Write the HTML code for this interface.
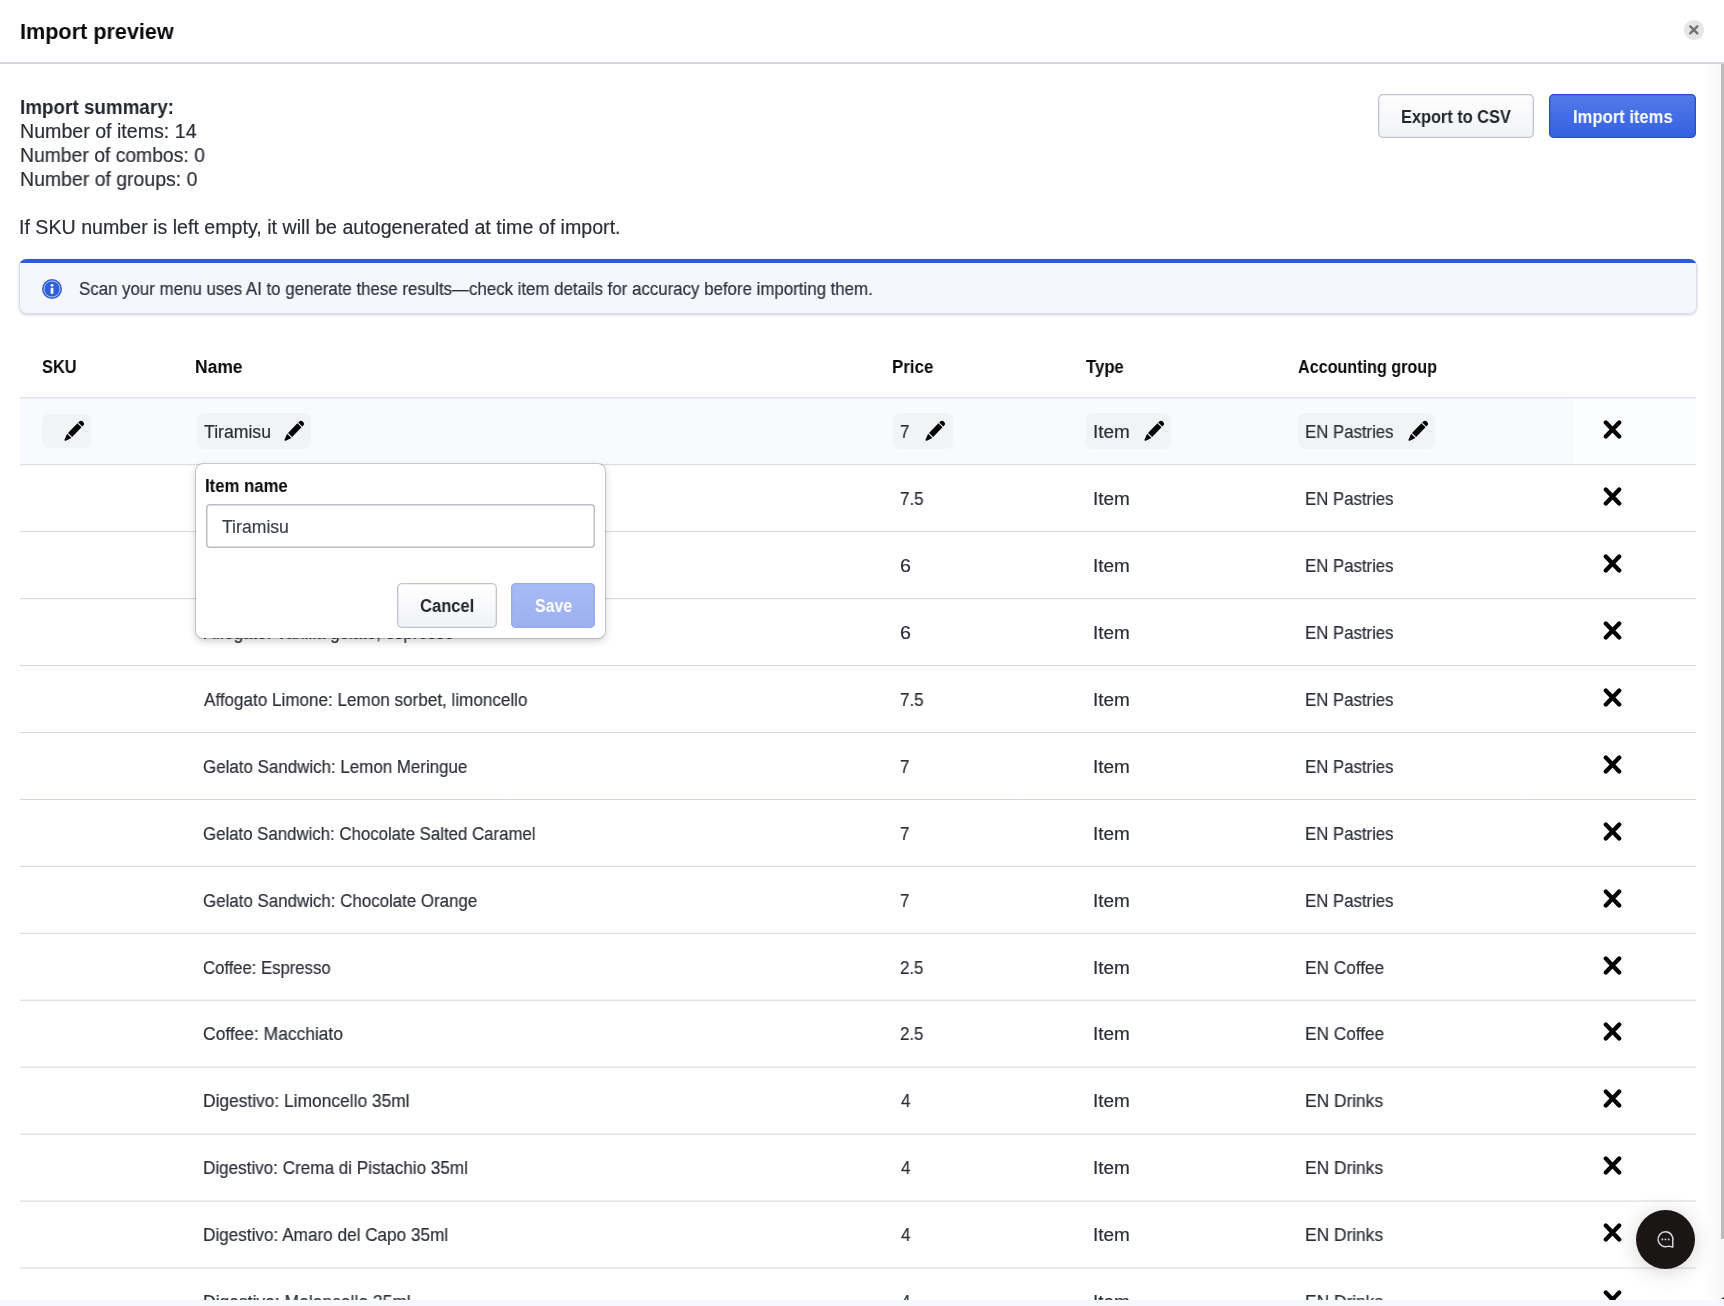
<!DOCTYPE html>
<html lang="en">
<head>
<meta charset="utf-8">
<title>Import preview</title>
<style>
*{box-sizing:border-box;margin:0;padding:0}
html,body{width:1724px;height:1306px;overflow:hidden;background:#fff}
body{position:relative;font-family:"Liberation Sans",Arial,sans-serif;color:#2b2e36;font-size:17.55px}
.t{position:absolute;white-space:nowrap;transform-origin:0 50%;display:block;font-weight:normal;will-change:transform}
.t{-webkit-text-stroke:.18px currentColor}
.t.b{font-weight:bold;color:#08090c;-webkit-text-stroke:0}
.hdr{position:absolute;left:0;top:0;width:1724px;height:64px;background:#fff}
.hdr:after{content:"";position:absolute;left:0;right:0;top:61.8px;height:2.2px;background:#d1d5dc}
.close{position:absolute;left:1684.2px;top:20.4px;width:19.6px;height:19.6px;border-radius:50%;background:#e6e6e6}
.close svg{position:absolute;left:0;top:0}
.btn{position:absolute;height:44.6px;border-radius:5px}
.btn.sec{box-shadow:inset 0 0 0 1.35px #c0c5cd;background:linear-gradient(#ffffff,#f1f2f5)}
.btn.sec .t{color:#22252b}
.btn.pri{box-shadow:inset 0 0 0 1.35px #2a4fd0;background:linear-gradient(#547be9,#3460e0)}
.btn.pri .t{color:#fff}
.btn.dis{box-shadow:inset 0 0 0 1.35px #97aaec;background:linear-gradient(#a9bbf5,#9bb0ef)}
.btn.dis .t{color:#fff}
.banner{position:absolute;left:19.4px;top:258.7px;width:1677.2px;height:55.8px;border-radius:7.5px;background:#f6f7fe;box-shadow:inset 0 0 0 1px #d9dce7,0 1px 3px rgba(20,30,60,.2);overflow:hidden}
.banner:before{content:"";position:absolute;left:0;right:0;top:0;height:4.4px;background:#2e5bd8}
.banner svg{position:absolute;left:22.6px;top:20.2px}
.tbl{position:absolute;left:20px;top:397px;width:1676px;height:910px}
.row{position:absolute;left:0;width:1676px}
.ln{position:absolute;left:0;right:0;top:0;height:2px}
.row.first{background:linear-gradient(#fff 1px,#f9fafd 1px)}
.cellx{position:absolute;left:1554px;top:1px;width:122px;bottom:0;background:#fbfcfe}
.x{position:absolute;left:1582.6px;top:22.7px;width:19px;height:19px}
.chip{position:absolute;top:16.2px;height:35.8px;border-radius:7px;background:#f2f3f7}
.pen{position:absolute;width:21px;height:21px;overflow:visible}
.pop{position:absolute;left:196px;top:464px;width:409px;height:174px;background:#fff;border-radius:7px;box-shadow:0 0 0 1px rgba(40,45,55,.22),0 3px 9px rgba(0,0,0,.2)}
.inp{position:absolute;left:10.1px;top:40px;width:388.7px;height:44.4px;border-radius:4px;background:#fff;box-shadow:inset 0 0 0 1.5px #b9bec8}
.inp .t{color:#3c4049}
.sb{position:absolute;left:1721px;top:63.6px;width:3px;height:1175.4px;background:#bababa}
.corner{position:absolute;left:1720.5px;top:1297.3px;width:0;height:0;border-style:solid;border-width:0 0 2.6px 3.5px;border-color:transparent transparent #2a2a2a transparent}
.edge{position:absolute;left:1703px;top:64px;width:21px;height:1236px;background:linear-gradient(90deg,rgba(0,0,0,0),rgba(0,0,0,.01) 40%,rgba(0,0,0,.036))}
.foot{position:absolute;left:0;top:1299.7px;width:1724px;height:7px;background:#f7f8fd}
.chat{position:absolute;left:1635.6px;top:1209.6px;width:59.4px;height:59.4px;border-radius:50%;background:#1a1615;box-shadow:0 3px 22px rgba(0,0,0,.17)}
.chat svg{position:absolute;left:0;top:0}
</style>
</head>
<body>
<div class="hdr"><span class="t b" style="left:19.91px;top:19.13px;line-height:24px;font-size:22.7px;transform:scaleX(0.9526)">Import preview</span>
<div class="close"><svg width="19.6" height="19.6" viewBox="0 0 20 20"><path d="M6.4 6.4 L13.6 13.6 M13.6 6.4 L6.4 13.6" stroke="#747474" stroke-width="2.5" stroke-linecap="round" fill="none"/></svg></div>
</div>

<div class="summary"><span class="t b" style="left:19.65px;top:95.21px;line-height:24px;font-size:19.6px;transform:scaleX(0.9619);color:#23262d">Import summary:</span><span class="t" style="left:19.71px;top:119.21px;line-height:24px;font-size:19.6px;transform:scaleX(1.0010)">Number of items: 14</span><span class="t" style="left:19.74px;top:143.21px;line-height:24px;font-size:19.6px;transform:scaleX(0.9868)">Number of combos: 0</span><span class="t" style="left:19.73px;top:167.11px;line-height:24px;font-size:19.6px;transform:scaleX(0.9930)">Number of groups: 0</span></div>
<span class="t" style="left:19.48px;top:214.51px;line-height:24px;font-size:19.6px;transform:scaleX(1.0013)">If SKU number is left empty, it will be autogenerated at time of import.</span>

<div class="btn sec" style="left:1378px;top:93.8px;width:156.2px"><span class="t b" style="left:22.54px;top:11.12px;line-height:24px;font-size:17.55px;transform:scaleX(0.9315)">Export to CSV</span></div>
<div class="btn pri" style="left:1549.2px;top:93.8px;width:147.1px"><span class="t b" style="left:23.73px;top:11.12px;line-height:24px;font-size:17.55px;transform:scaleX(0.9474)">Import items</span></div>

<div class="banner">
<svg width="20" height="20" viewBox="0 0 20 20"><circle cx="10" cy="10" r="10" fill="#2f5fdb"/><circle cx="10" cy="10" r="8.05" fill="none" stroke="#b7c7f3" stroke-width="0.95"/><circle cx="10.05" cy="6.35" r="1.4" fill="#fff"/><rect x="8.75" y="8.8" width="2.6" height="6" fill="#fff"/></svg>
<span class="t" style="left:59.52px;top:18.02px;line-height:24px;font-size:17.55px;transform:scaleX(0.9618)">Scan your menu uses AI to generate these results—check item details for accuracy before importing them.</span>
</div>

<div class="thead"><span class="t b" style="left:41.56px;top:354.82px;line-height:24px;font-size:17.55px;transform:scaleX(0.9354)">SKU</span><span class="t b" style="left:195.47px;top:354.82px;line-height:24px;font-size:17.55px;transform:scaleX(0.9932)">Name</span><span class="t b" style="left:892.41px;top:354.82px;line-height:24px;font-size:17.55px;transform:scaleX(0.9621)">Price</span><span class="t b" style="left:1086.13px;top:354.82px;line-height:24px;font-size:17.55px;transform:scaleX(0.9541)">Type</span><span class="t b" style="left:1297.55px;top:354.82px;line-height:24px;font-size:17.55px;transform:scaleX(0.9209)">Accounting group</span></div>

<div class="tbl">
<div class="row first" style="top:0px;height:67px"><i class="cellx"></i><i class="ln" style="background:linear-gradient(rgba(209,214,222,0.70) 50%,rgba(209,214,222,0.30) 50%)"></i><i class="chip" style="left:22.2px;width:49.0px;top:16.6px;height:34.7px"></i><svg class="pen" style="left:44.0px;top:23.4px" viewBox="0 0 21 21"><g transform="translate(0.8 20.5) rotate(-46)" fill="#000"><path d="M0.5 -0.8 L6.4 -2.95 L6.4 2.95 L0.5 0.8 Q-0.9 0 0.5 -0.8Z"/><rect x="7.6" y="-2.85" width="13.5" height="5.7"/><path d="M22.2 -2.85 H23.7 A2.4 2.85 0 0 1 23.7 2.85 H22.2Z"/></g></svg><i class="chip" style="left:176.5px;width:114.9px;top:15.9px;height:36.1px"></i><svg class="pen" style="left:264.1px;top:23.4px" viewBox="0 0 21 21"><g transform="translate(0.8 20.5) rotate(-46)" fill="#000"><path d="M0.5 -0.8 L6.4 -2.95 L6.4 2.95 L0.5 0.8 Q-0.9 0 0.5 -0.8Z"/><rect x="7.6" y="-2.85" width="13.5" height="5.7"/><path d="M22.2 -2.85 H23.7 A2.4 2.85 0 0 1 23.7 2.85 H22.2Z"/></g></svg><i class="chip" style="left:872.9px;width:59.7px;top:15.9px;height:36.0px"></i><svg class="pen" style="left:905.4px;top:23.4px" viewBox="0 0 21 21"><g transform="translate(0.8 20.5) rotate(-46)" fill="#000"><path d="M0.5 -0.8 L6.4 -2.95 L6.4 2.95 L0.5 0.8 Q-0.9 0 0.5 -0.8Z"/><rect x="7.6" y="-2.85" width="13.5" height="5.7"/><path d="M22.2 -2.85 H23.7 A2.4 2.85 0 0 1 23.7 2.85 H22.2Z"/></g></svg><i class="chip" style="left:1066.0px;width:84.9px;top:15.9px;height:36.0px"></i><svg class="pen" style="left:1123.5px;top:23.4px" viewBox="0 0 21 21"><g transform="translate(0.8 20.5) rotate(-46)" fill="#000"><path d="M0.5 -0.8 L6.4 -2.95 L6.4 2.95 L0.5 0.8 Q-0.9 0 0.5 -0.8Z"/><rect x="7.6" y="-2.85" width="13.5" height="5.7"/><path d="M22.2 -2.85 H23.7 A2.4 2.85 0 0 1 23.7 2.85 H22.2Z"/></g></svg><i class="chip" style="left:1278.1px;width:136.9px;top:15.9px;height:36.0px"></i><svg class="pen" style="left:1387.7px;top:23.4px" viewBox="0 0 21 21"><g transform="translate(0.8 20.5) rotate(-46)" fill="#000"><path d="M0.5 -0.8 L6.4 -2.95 L6.4 2.95 L0.5 0.8 Q-0.9 0 0.5 -0.8Z"/><rect x="7.6" y="-2.85" width="13.5" height="5.7"/><path d="M22.2 -2.85 H23.7 A2.4 2.85 0 0 1 23.7 2.85 H22.2Z"/></g></svg><span class="t" style="left:183.91px;top:22.92px;line-height:24px;font-size:17.55px;transform:scaleX(1.0069)">Tiramisu</span><span class="t" style="left:880.25px;top:22.92px;line-height:24px;font-size:17.55px;transform:scaleX(0.9650)">7</span><span class="t" style="left:1072.73px;top:22.92px;line-height:24px;font-size:17.55px;transform:scaleX(1.0812)">Item</span><span class="t" style="left:1284.92px;top:22.92px;line-height:24px;font-size:17.55px;transform:scaleX(0.9563)">EN Pastries</span><svg class="x" style="top:22.6px" viewBox="0 0 19 19"><path d="M2.8 2.55 L16.2 16.45 M16.2 2.55 L2.8 16.45" stroke="#000" stroke-width="4.3" stroke-linecap="round" fill="none"/></svg></div>
<div class="row" style="top:67px;height:67px"><i class="ln" style="background:linear-gradient(rgba(209,214,222,0.76) 50%,rgba(209,214,222,0.24) 50%)"></i><span class="t" style="left:183.33px;top:22.92px;line-height:24px;font-size:17.55px;transform:scaleX(0.9650)">Cannoli Siciliani: Ricotta, pistachio</span><span class="t" style="left:880.24px;top:22.92px;line-height:24px;font-size:17.55px;transform:scaleX(0.9720)">7.5</span><span class="t" style="left:1072.73px;top:22.92px;line-height:24px;font-size:17.55px;transform:scaleX(1.0812)">Item</span><span class="t" style="left:1284.92px;top:22.92px;line-height:24px;font-size:17.55px;transform:scaleX(0.9563)">EN Pastries</span><svg class="x" style="top:22.6px" viewBox="0 0 19 19"><path d="M2.8 2.55 L16.2 16.45 M16.2 2.55 L2.8 16.45" stroke="#000" stroke-width="4.3" stroke-linecap="round" fill="none"/></svg></div>
<div class="row" style="top:134px;height:67px"><i class="ln" style="background:linear-gradient(rgba(209,214,222,0.82) 50%,rgba(209,214,222,0.18) 50%)"></i><span class="t" style="left:182.91px;top:22.92px;line-height:24px;font-size:17.55px;transform:scaleX(0.9650)">Panna Cotta: Wild berries</span><span class="t" style="left:880.11px;top:22.92px;line-height:24px;font-size:17.55px;transform:scaleX(1.1213)">6</span><span class="t" style="left:1072.73px;top:22.92px;line-height:24px;font-size:17.55px;transform:scaleX(1.0812)">Item</span><span class="t" style="left:1284.92px;top:22.92px;line-height:24px;font-size:17.55px;transform:scaleX(0.9563)">EN Pastries</span><svg class="x" style="top:22.6px" viewBox="0 0 19 19"><path d="M2.8 2.55 L16.2 16.45 M16.2 2.55 L2.8 16.45" stroke="#000" stroke-width="4.3" stroke-linecap="round" fill="none"/></svg></div>
<div class="row" style="top:201px;height:67px"><i class="ln" style="background:linear-gradient(rgba(209,214,222,0.88) 50%,rgba(209,214,222,0.12) 50%)"></i><span class="t" style="left:184.09px;top:22.92px;line-height:24px;font-size:17.55px;transform:scaleX(0.9632)">Affogato: Vanilla gelato, espresso</span><span class="t" style="left:880.11px;top:22.92px;line-height:24px;font-size:17.55px;transform:scaleX(1.1213)">6</span><span class="t" style="left:1072.73px;top:22.92px;line-height:24px;font-size:17.55px;transform:scaleX(1.0812)">Item</span><span class="t" style="left:1284.92px;top:22.92px;line-height:24px;font-size:17.55px;transform:scaleX(0.9563)">EN Pastries</span><svg class="x" style="top:22.6px" viewBox="0 0 19 19"><path d="M2.8 2.55 L16.2 16.45 M16.2 2.55 L2.8 16.45" stroke="#000" stroke-width="4.3" stroke-linecap="round" fill="none"/></svg></div>
<div class="row" style="top:268px;height:67px"><i class="ln" style="background:linear-gradient(rgba(209,214,222,0.94) 50%,rgba(209,214,222,0.06) 50%)"></i><span class="t" style="left:184.08px;top:22.92px;line-height:24px;font-size:17.55px;transform:scaleX(0.9742)">Affogato Limone: Lemon sorbet, limoncello</span><span class="t" style="left:880.24px;top:22.92px;line-height:24px;font-size:17.55px;transform:scaleX(0.9720)">7.5</span><span class="t" style="left:1072.73px;top:22.92px;line-height:24px;font-size:17.55px;transform:scaleX(1.0812)">Item</span><span class="t" style="left:1284.92px;top:22.92px;line-height:24px;font-size:17.55px;transform:scaleX(0.9563)">EN Pastries</span><svg class="x" style="top:22.6px" viewBox="0 0 19 19"><path d="M2.8 2.55 L16.2 16.45 M16.2 2.55 L2.8 16.45" stroke="#000" stroke-width="4.3" stroke-linecap="round" fill="none"/></svg></div>
<div class="row" style="top:335px;height:66px"><i class="ln" style="background:linear-gradient(rgba(209,214,222,1.00) 50%,rgba(209,214,222,0.00) 50%)"></i><span class="t" style="left:183.35px;top:22.92px;line-height:24px;font-size:17.55px;transform:scaleX(0.9655)">Gelato Sandwich: Lemon Meringue</span><span class="t" style="left:880.25px;top:22.92px;line-height:24px;font-size:17.55px;transform:scaleX(0.9650)">7</span><span class="t" style="left:1072.73px;top:22.92px;line-height:24px;font-size:17.55px;transform:scaleX(1.0812)">Item</span><span class="t" style="left:1284.92px;top:22.92px;line-height:24px;font-size:17.55px;transform:scaleX(0.9563)">EN Pastries</span><svg class="x" style="top:22.6px" viewBox="0 0 19 19"><path d="M2.8 2.55 L16.2 16.45 M16.2 2.55 L2.8 16.45" stroke="#000" stroke-width="4.3" stroke-linecap="round" fill="none"/></svg></div>
<div class="row" style="top:401px;height:67px"><i class="ln" style="background:linear-gradient(rgba(209,214,222,0.06) 50%,rgba(209,214,222,0.94) 50%)"></i><span class="t" style="left:183.36px;top:23.92px;line-height:24px;font-size:17.55px;transform:scaleX(0.9584)">Gelato Sandwich: Chocolate Salted Caramel</span><span class="t" style="left:880.25px;top:23.92px;line-height:24px;font-size:17.55px;transform:scaleX(0.9650)">7</span><span class="t" style="left:1072.73px;top:23.92px;line-height:24px;font-size:17.55px;transform:scaleX(1.0812)">Item</span><span class="t" style="left:1284.92px;top:23.92px;line-height:24px;font-size:17.55px;transform:scaleX(0.9563)">EN Pastries</span><svg class="x" style="top:23.6px" viewBox="0 0 19 19"><path d="M2.8 2.55 L16.2 16.45 M16.2 2.55 L2.8 16.45" stroke="#000" stroke-width="4.3" stroke-linecap="round" fill="none"/></svg></div>
<div class="row" style="top:468px;height:67px"><i class="ln" style="background:linear-gradient(rgba(209,214,222,0.12) 50%,rgba(209,214,222,0.88) 50%)"></i><span class="t" style="left:183.35px;top:23.92px;line-height:24px;font-size:17.55px;transform:scaleX(0.9639)">Gelato Sandwich: Chocolate Orange</span><span class="t" style="left:880.25px;top:23.92px;line-height:24px;font-size:17.55px;transform:scaleX(0.9650)">7</span><span class="t" style="left:1072.73px;top:23.92px;line-height:24px;font-size:17.55px;transform:scaleX(1.0812)">Item</span><span class="t" style="left:1284.92px;top:23.92px;line-height:24px;font-size:17.55px;transform:scaleX(0.9563)">EN Pastries</span><svg class="x" style="top:23.6px" viewBox="0 0 19 19"><path d="M2.8 2.55 L16.2 16.45 M16.2 2.55 L2.8 16.45" stroke="#000" stroke-width="4.3" stroke-linecap="round" fill="none"/></svg></div>
<div class="row" style="top:535px;height:67px"><i class="ln" style="background:linear-gradient(rgba(209,214,222,0.18) 50%,rgba(209,214,222,0.82) 50%)"></i><span class="t" style="left:183.34px;top:23.92px;line-height:24px;font-size:17.55px;transform:scaleX(0.9508)">Coffee: Espresso</span><span class="t" style="left:880.25px;top:23.92px;line-height:24px;font-size:17.55px;transform:scaleX(0.9650)">2.5</span><span class="t" style="left:1072.73px;top:23.92px;line-height:24px;font-size:17.55px;transform:scaleX(1.0812)">Item</span><span class="t" style="left:1284.88px;top:23.92px;line-height:24px;font-size:17.55px;transform:scaleX(0.9827)">EN Coffee</span><svg class="x" style="top:23.6px" viewBox="0 0 19 19"><path d="M2.8 2.55 L16.2 16.45 M16.2 2.55 L2.8 16.45" stroke="#000" stroke-width="4.3" stroke-linecap="round" fill="none"/></svg></div>
<div class="row" style="top:602px;height:67px"><i class="ln" style="background:linear-gradient(rgba(209,214,222,0.24) 50%,rgba(209,214,222,0.76) 50%)"></i><span class="t" style="left:183.31px;top:22.92px;line-height:24px;font-size:17.55px;transform:scaleX(0.9930)">Coffee: Macchiato</span><span class="t" style="left:880.25px;top:22.92px;line-height:24px;font-size:17.55px;transform:scaleX(0.9650)">2.5</span><span class="t" style="left:1072.73px;top:22.92px;line-height:24px;font-size:17.55px;transform:scaleX(1.0812)">Item</span><span class="t" style="left:1284.88px;top:22.92px;line-height:24px;font-size:17.55px;transform:scaleX(0.9827)">EN Coffee</span><svg class="x" style="top:22.6px" viewBox="0 0 19 19"><path d="M2.8 2.55 L16.2 16.45 M16.2 2.55 L2.8 16.45" stroke="#000" stroke-width="4.3" stroke-linecap="round" fill="none"/></svg></div>
<div class="row" style="top:669px;height:67px"><i class="ln" style="background:linear-gradient(rgba(209,214,222,0.30) 50%,rgba(209,214,222,0.70) 50%)"></i><span class="t" style="left:182.87px;top:22.92px;line-height:24px;font-size:17.55px;transform:scaleX(0.9908)">Digestivo: Limoncello 35ml</span><span class="t" style="left:880.81px;top:22.92px;line-height:24px;font-size:17.55px;transform:scaleX(0.9650)">4</span><span class="t" style="left:1072.73px;top:22.92px;line-height:24px;font-size:17.55px;transform:scaleX(1.0812)">Item</span><span class="t" style="left:1284.87px;top:22.92px;line-height:24px;font-size:17.55px;transform:scaleX(0.9895)">EN Drinks</span><svg class="x" style="top:22.6px" viewBox="0 0 19 19"><path d="M2.8 2.55 L16.2 16.45 M16.2 2.55 L2.8 16.45" stroke="#000" stroke-width="4.3" stroke-linecap="round" fill="none"/></svg></div>
<div class="row" style="top:736px;height:67px"><i class="ln" style="background:linear-gradient(rgba(209,214,222,0.36) 50%,rgba(209,214,222,0.64) 50%)"></i><span class="t" style="left:182.89px;top:22.92px;line-height:24px;font-size:17.55px;transform:scaleX(0.9745)">Digestivo: Crema di Pistachio 35ml</span><span class="t" style="left:880.81px;top:22.92px;line-height:24px;font-size:17.55px;transform:scaleX(0.9650)">4</span><span class="t" style="left:1072.73px;top:22.92px;line-height:24px;font-size:17.55px;transform:scaleX(1.0812)">Item</span><span class="t" style="left:1284.87px;top:22.92px;line-height:24px;font-size:17.55px;transform:scaleX(0.9895)">EN Drinks</span><svg class="x" style="top:22.6px" viewBox="0 0 19 19"><path d="M2.8 2.55 L16.2 16.45 M16.2 2.55 L2.8 16.45" stroke="#000" stroke-width="4.3" stroke-linecap="round" fill="none"/></svg></div>
<div class="row" style="top:803px;height:67px"><i class="ln" style="background:linear-gradient(rgba(209,214,222,0.42) 50%,rgba(209,214,222,0.58) 50%)"></i><span class="t" style="left:182.89px;top:22.92px;line-height:24px;font-size:17.55px;transform:scaleX(0.9786)">Digestivo: Amaro del Capo 35ml</span><span class="t" style="left:880.81px;top:22.92px;line-height:24px;font-size:17.55px;transform:scaleX(0.9650)">4</span><span class="t" style="left:1072.73px;top:22.92px;line-height:24px;font-size:17.55px;transform:scaleX(1.0812)">Item</span><span class="t" style="left:1284.87px;top:22.92px;line-height:24px;font-size:17.55px;transform:scaleX(0.9895)">EN Drinks</span><svg class="x" style="top:22.6px" viewBox="0 0 19 19"><path d="M2.8 2.55 L16.2 16.45 M16.2 2.55 L2.8 16.45" stroke="#000" stroke-width="4.3" stroke-linecap="round" fill="none"/></svg></div>
<div class="row" style="top:870px;height:67px"><i class="ln" style="background:linear-gradient(rgba(209,214,222,0.48) 50%,rgba(209,214,222,0.52) 50%)"></i><span class="t" style="left:182.86px;top:22.92px;line-height:24px;font-size:17.55px;transform:scaleX(0.9966)">Digestivo: Meloncello 35ml</span><span class="t" style="left:880.81px;top:22.92px;line-height:24px;font-size:17.55px;transform:scaleX(0.9650)">4</span><span class="t" style="left:1072.73px;top:22.92px;line-height:24px;font-size:17.55px;transform:scaleX(1.0812)">Item</span><span class="t" style="left:1284.87px;top:22.92px;line-height:24px;font-size:17.55px;transform:scaleX(0.9895)">EN Drinks</span><svg class="x" style="top:22.6px" viewBox="0 0 19 19"><path d="M2.8 2.55 L16.2 16.45 M16.2 2.55 L2.8 16.45" stroke="#000" stroke-width="4.3" stroke-linecap="round" fill="none"/></svg></div>
</div>

<div class="pop">
<span class="t b" style="left:9.32px;top:10.02px;line-height:24px;font-size:17.55px;transform:scaleX(0.9528)">Item name</span>
<div class="inp"><span class="t" style="left:15.51px;top:11.12px;line-height:24px;font-size:17.55px;transform:scaleX(1.0054)">Tiramisu</span></div>
<div class="btn sec" style="left:200.9px;top:119.3px;width:100px"><span class="t b" style="left:22.71px;top:10.42px;line-height:24px;font-size:17.55px;transform:scaleX(0.9454)">Cancel</span></div>
<div class="btn dis" style="left:315.4px;top:119.3px;width:83.7px"><span class="t b" style="left:23.19px;top:10.42px;line-height:24px;font-size:17.55px;transform:scaleX(0.9063)">Save</span></div>
</div>

<div class="edge"></div>
<div class="sb"></div>
<div class="corner"></div>
<div class="foot"></div>
<div class="chat"><svg width="59.4" height="59.4" viewBox="0 0 59.4 59.4"><path d="M36.75 31 A7.45 7.45 0 1 0 32.4 36.15 L36.8 37 Z" fill="none" stroke="#d9d9db" stroke-width="1.45" stroke-linejoin="round"/><rect x="25.5" y="28.5" width="1.8" height="1.8" rx=".4" fill="#d0d0d2"/><rect x="28.6" y="28.5" width="1.8" height="1.8" rx=".4" fill="#d0d0d2"/><rect x="31.8" y="28.5" width="1.8" height="1.8" rx=".4" fill="#d0d0d2"/></svg></div>
</body>
</html>
